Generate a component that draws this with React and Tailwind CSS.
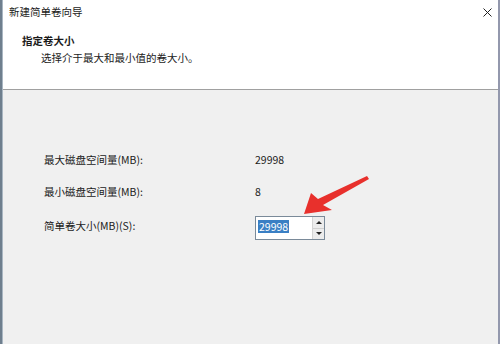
import React from "react";

const font = { fontFamily: '"Noto Sans CJK SC", "Noto Sans", sans-serif' };

function SpinBox({ value }) {
  return (
    <div className="flex h-[24px] w-[70px] border border-[#7a8a99] bg-white">
      <div className="flex-1 pl-[2px] pt-[2px]">
        <span className="bg-[#3a7fc4] px-px leading-[13px] text-white inline-block">{value}</span>
      </div>
      <div className="flex w-[12px] flex-col border-l border-[#d4d4d4]">
        <div className="flex flex-1 items-center justify-center bg-[#ececec] border-b border-[#d0d0d0]">
          <div className="h-0 w-0 border-x-[3px] border-b-[3px] border-x-transparent border-b-[#222]" />
        </div>
        <div className="flex flex-1 items-center justify-center bg-[#ececec]">
          <div className="h-0 w-0 border-x-[3px] border-t-[3px] border-x-transparent border-t-[#222]" />
        </div>
      </div>
    </div>
  );
}

export default function App() {
  return (
    <div
      className="relative flex h-[344px] w-[500px] overflow-hidden bg-[#5d6b78] text-[10.5px] text-[#1b1b1b]"
      style={font}
    >
      <div className="w-[2px] bg-[#6f7f8e]" />
      <div className="flex flex-1 flex-col border-l border-r-2 border-l-[#a9b6c2] border-r-[#9398ad] bg-[#f0f0f0]">
        {/* header */}
        <div className="relative h-[90px] border-b border-[#a0a0a0] bg-white">
          <div className="pl-[6px] pt-[4px] leading-[16px]">新建简单卷向导</div>
          <div className="mt-[13px] pl-[19px] font-bold leading-[16px]">指定卷大小</div>
          <div className="mt-px pl-[38px] leading-[16px]">选择介于最大和最小值的卷大小。</div>
          <svg className="absolute right-[6px] top-[8px]" width="9" height="9" viewBox="0 0 9 9">
            <path d="M0.5 0.5 L8.5 8.5 M8.5 0.5 L0.5 8.5" stroke="#222" strokeWidth="1" />
          </svg>
        </div>

        {/* body */}
        <div className="flex flex-col pl-[41px] pt-[60px]">
          <div className="flex h-[20px] items-center">
            <div className="w-[211px]">最大磁盘空间量(MB):</div>
            <div>29998</div>
          </div>
          <div className="mt-[12px] flex h-[20px] items-center">
            <div className="w-[211px]">最小磁盘空间量(MB):</div>
            <div>8</div>
          </div>
          <div className="mt-[14px] flex items-start">
            <div className="w-[211px] pt-[1px] leading-[18px]">简单卷大小(MB)(S):</div>
            <SpinBox value="29998" />
          </div>
        </div>
      </div>

      {/* red arrow annotation */}
      <svg className="pointer-events-none absolute left-0 top-0" width="500" height="344" viewBox="0 0 500 344">
        <polygon
          points="304,214 311,193 318,199 367,176 369,179 323,205 332,210"
          fill="#e8302c"
        />
      </svg>
    </div>
  );
}
